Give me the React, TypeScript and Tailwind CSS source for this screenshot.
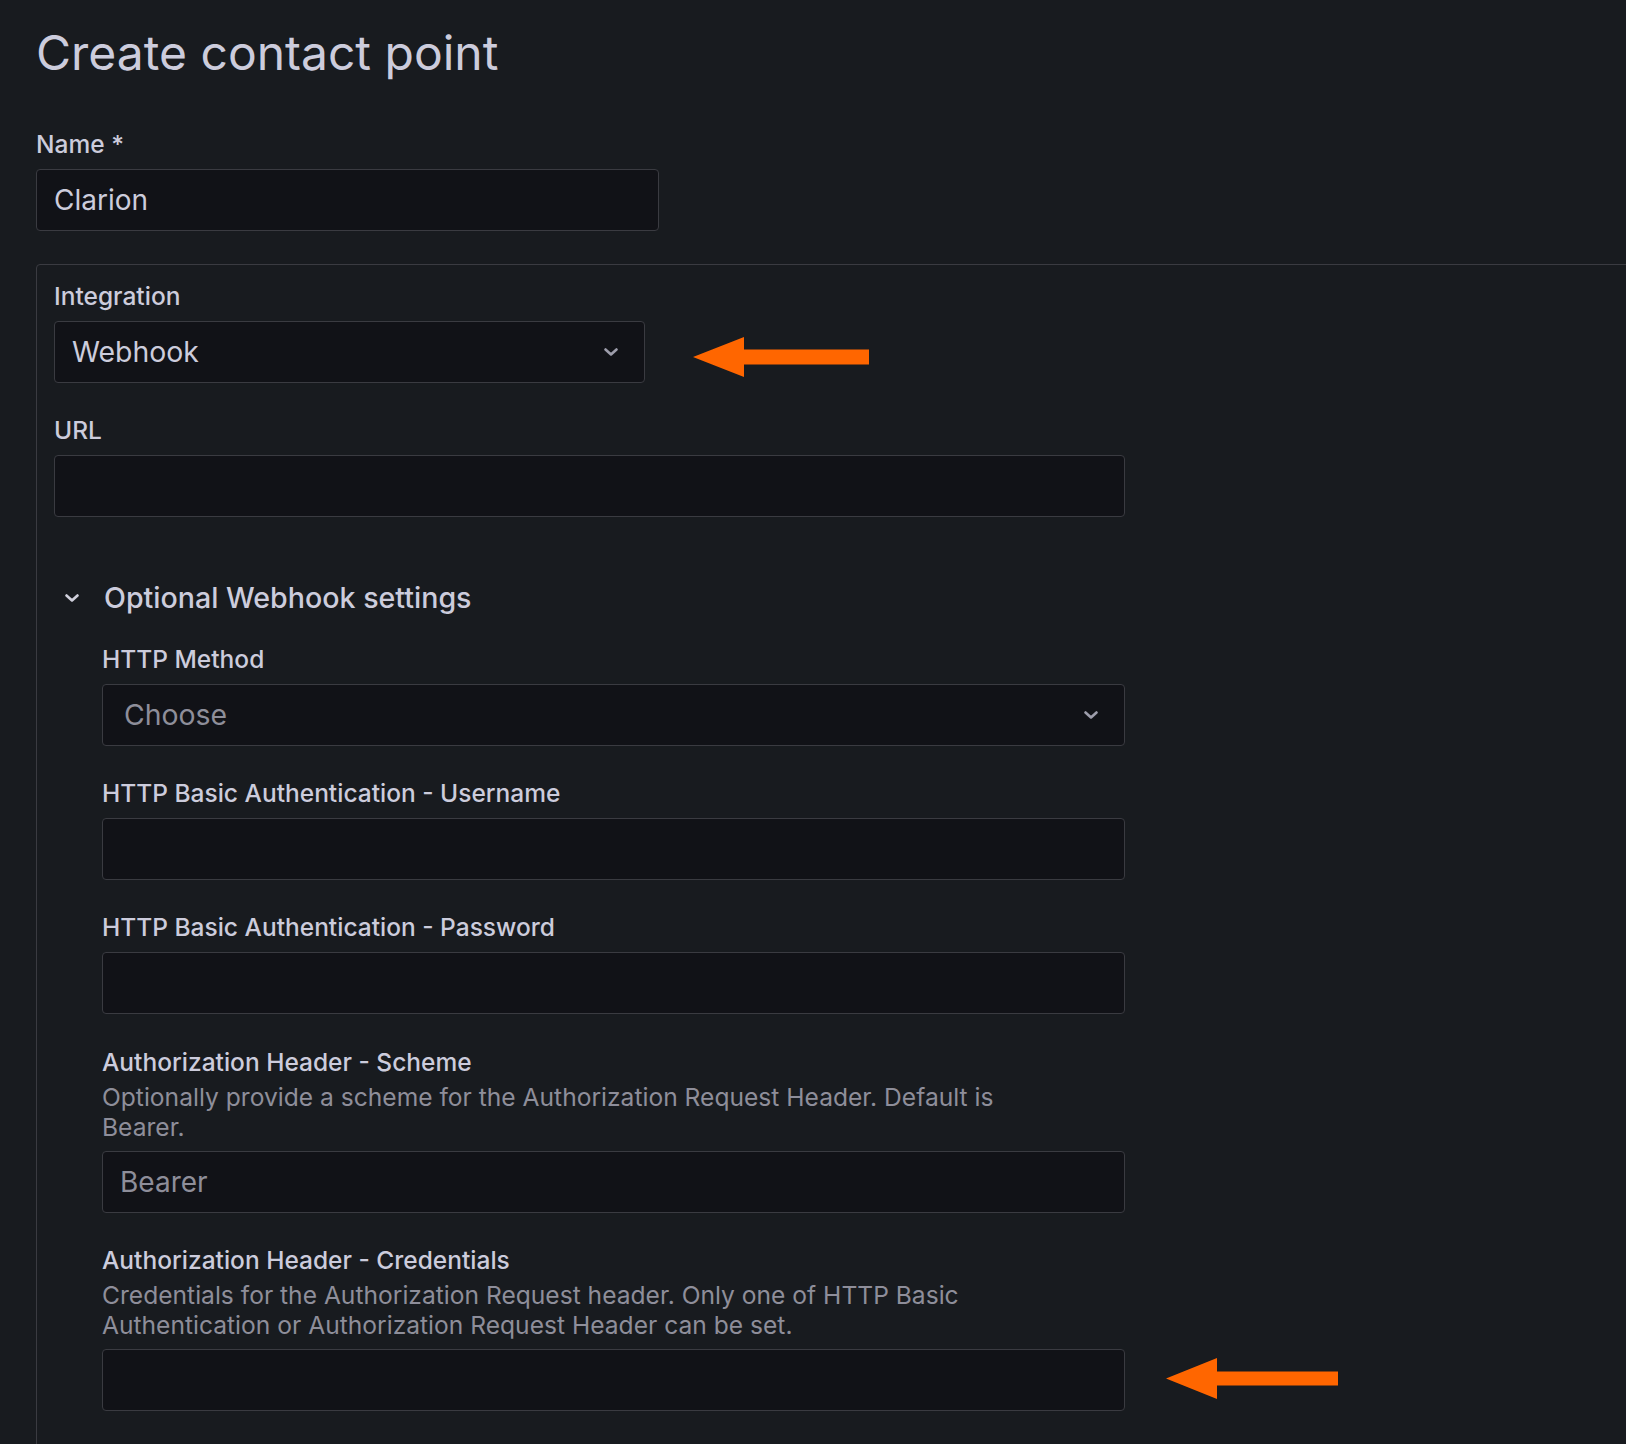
import React from "react";

const FONT = { fontFamily: "Inter, 'Noto Sans', sans-serif" };

function Chevron({ className = "" }: { className?: string }) {
  return (
    <svg width="14" height="8" viewBox="0 0 14 8" className={className} fill="none">
      <path d="M1.5 1.5 L7 6.5 L12.5 1.5" stroke="currentColor" strokeWidth="2.6" strokeLinecap="round" strokeLinejoin="round" />
    </svg>
  );
}

function Arrow({ width, height, shaft }: { width: number; height: number; shaft: number }) {
  const head = 51;
  const mid = height / 2;
  return (
    <svg width={width} height={height} viewBox={`0 0 ${width} ${height}`} className="shrink-0">
      <polygon
        points={`0,${mid} ${head},0 ${head},${mid - shaft / 2} ${width},${mid - shaft / 2} ${width},${mid + shaft / 2} ${head},${mid + shaft / 2} ${head},${height}`}
        fill="#ff6600"
      />
    </svg>
  );
}

function Label({ children }: { children: React.ReactNode }) {
  return <div className="text-[24.5px] font-medium leading-[30px] text-[#ccccdc]">{children}</div>;
}

function Description({ children }: { children: React.ReactNode }) {
  return <div className="mt-[5px] max-w-[930px] text-[24.6px] leading-[30px] text-[#8e8e9a]">{children}</div>;
}

function TextInput({ value, placeholder, className = "" }: { value?: string; placeholder?: string; className?: string }) {
  return (
    <input
      readOnly
      value={value ?? ""}
      placeholder={placeholder}
      style={FONT}
      className={`h-[62px] rounded-[4px] border border-[#3a3b41] bg-[#111217] pl-[17px] text-[28px] text-[#ccccdc] outline-none placeholder:text-[#8e8e9a] ${className}`}
    />
  );
}

function SelectBox({ text, muted, className = "" }: { text: string; muted?: boolean; className?: string }) {
  return (
    <div
      className={`flex h-[62px] items-center justify-between rounded-[4px] border border-[#3a3b41] bg-[#111217] pr-[26px] text-[28.4px] ${muted ? "pl-[21px] text-[#8e8e9a]" : "pl-[17px] text-[#ccccdc]"} ${className}`}
    >
      <span>{text}</span>
      <Chevron className="text-[#9d9dab]" />
    </div>
  );
}

export default function App() {
  return (
    <div style={FONT} className="h-[1444px] w-full overflow-hidden bg-[#181b1f] pl-[36px] pt-[23px]">
      <h1 className="text-[48px] font-normal leading-[60px] text-[#ccccdc]">Create contact point</h1>

      <div className="mt-[46px]">
        <Label>Name *</Label>
        <TextInput value="Clarion" className="mt-[10px] w-[623px]" />
      </div>

      <div className="mt-[33px] w-[1700px] rounded-[4px] border border-[#3a3b41] pb-[80px] pl-[17px] pt-[16px]">
        <div className="w-[1071px]">
          <div>
            <Label>Integration</Label>
            <div className="mt-[10px] flex items-start gap-[48px]">
              <SelectBox text="Webhook" className="w-[591px]" />
              <div className="mt-[16px]">
                <Arrow width={176} height={40} shaft={15} />
              </div>
            </div>
          </div>

          <div className="mt-[32px]">
            <Label>URL</Label>
            <TextInput className="mt-[10px] w-full" />
          </div>

          <div className="mt-[64px] flex h-[34px] items-center gap-[25px] pl-[11px]">
            <Chevron className="text-[#d0d0dc]" />
            <span className="text-[28.6px] font-medium leading-[34px] text-[#ccccdc]">Optional Webhook settings</span>
          </div>

          <div className="pl-[48px]">
            <div className="mt-[29px]">
              <Label>HTTP Method</Label>
              <SelectBox text="Choose" muted className="mt-[10px] w-full" />
            </div>

            <div className="mt-[32px]">
              <Label>HTTP Basic Authentication - Username</Label>
              <TextInput className="mt-[10px] w-full" />
            </div>

            <div className="mt-[32px]">
              <Label>HTTP Basic Authentication - Password</Label>
              <TextInput className="mt-[10px] w-full" />
            </div>

            <div className="mt-[33px]">
              <Label>Authorization Header - Scheme</Label>
              <Description>Optionally provide a scheme for the Authorization Request Header. Default is Bearer.</Description>
              <TextInput placeholder="Bearer" className="mt-[9px] w-full" />
            </div>

            <div className="mt-[32px]">
              <Label>Authorization Header - Credentials</Label>
              <Description>
                Credentials for the Authorization Request header. Only one of HTTP Basic Authentication or Authorization Request Header can be set.
              </Description>
              <div className="mt-[9px] flex items-start gap-[41px]">
                <TextInput className="w-[1023px] shrink-0" />
                <div className="mt-[9px]">
                  <Arrow width={172} height={41} shaft={14} />
                </div>
              </div>
            </div>
          </div>
        </div>
      </div>
    </div>
  );
}
